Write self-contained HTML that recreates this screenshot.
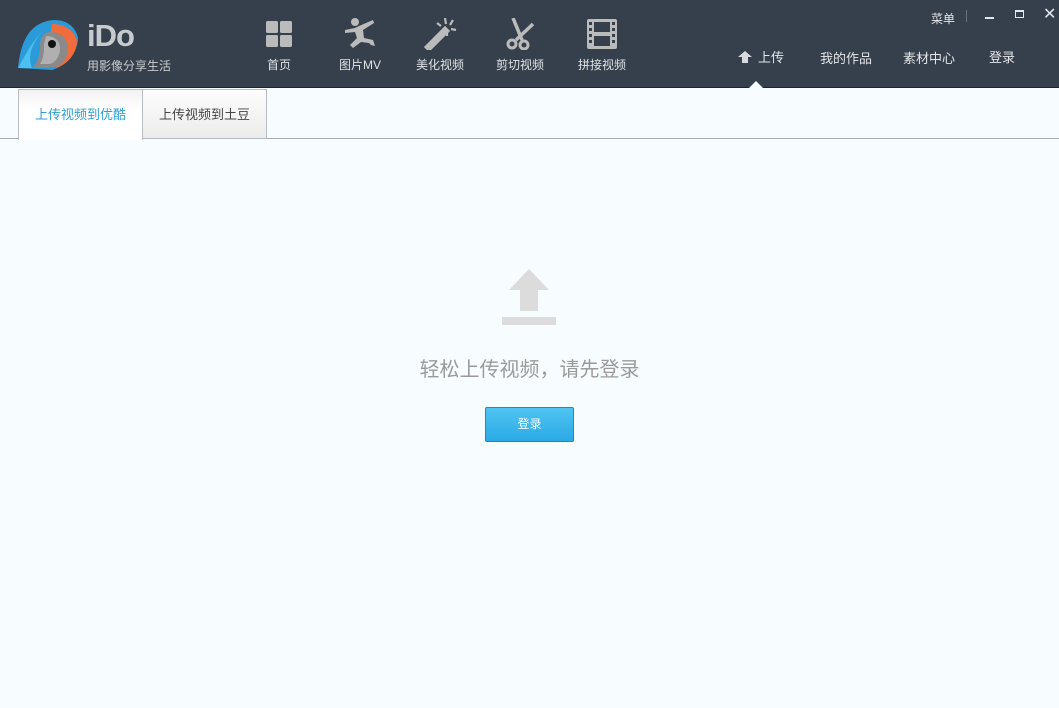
<!DOCTYPE html>
<html><head><meta charset="utf-8"><style>
*{margin:0;padding:0;box-sizing:border-box}
body{width:1059px;height:708px;overflow:hidden;background:#f7fcff;font-family:"Liberation Sans","Noto Sans CJK SC",sans-serif;position:relative}
.top{position:absolute;left:0;top:0;width:1059px;height:88px;background:#36404c;border-bottom:1px solid #1e242b}
.t{position:absolute;color:#e3e6ea;font-size:12px;white-space:nowrap}
.nav{position:absolute;top:18px;width:60px;text-align:center;color:#e0e3e6;font-size:12px}
.nav svg{display:block;margin:0 auto 6px;height:32px}
.tab{position:absolute;top:89px;height:50px;font-size:13px;line-height:50px;text-align:center}
</style></head><body>
<div class="top">
<svg style="position:absolute;left:16px;top:18px" width="64" height="54" viewBox="0 0 64 54">
<path d="M2 50 C4 30 10 4 38 2 C52 2 60 10 62 20 C62 34 50 48 36 52 Z" fill="#2a9ad8"/>
<path d="M36 6 C50 6 60 14 61 24 C60 36 52 46 40 50 L34 20 Z" fill="#f26b3a"/>
<path d="M34 14 C46 14 52 22 52 30 C52 42 44 50 34 50 L16 50 C22 44 24 36 24 28 C24 20 28 14 34 14 Z" fill="#8a8a8a"/>
<path d="M30 18 C40 18 44 24 44 30 C44 38 40 44 34 46 L24 46 C28 40 28 32 28 26 Z" fill="#b0b0b0"/>
<circle cx="36" cy="26" r="4" fill="#111"/>
<path d="M2 50 C8 40 14 26 26 14 C14 28 12 40 16 50 Z" fill="#4cc0f0"/>
</svg>
<div class="t" style="left:87px;top:18px;font-size:31px;font-weight:bold;color:#c8cbce;letter-spacing:-1px">iDo</div>
<div class="t" style="left:87px;top:57px;font-size:12px;color:#c8cbce">用影像分享生活</div>

<div class="nav" style="left:249px"><svg width="28" height="28" viewBox="0 0 28 28"><rect x="1" y="1" width="12" height="12" rx="1.5" fill="#bbb"/><rect x="15" y="1" width="12" height="12" rx="1.5" fill="#bbb"/><rect x="1" y="15" width="12" height="12" rx="1.5" fill="#bbb"/><rect x="15" y="15" width="12" height="12" rx="1.5" fill="#bbb"/></svg>首页</div>
<div class="nav" style="left:330px"><svg width="34" height="32" viewBox="0 0 34 32"><circle cx="12" cy="4" r="4" fill="#bbb"/><path d="M2 12 L12 10 L16 8 L30 2 L31 5 L20 12 L21 20 L30 22 L32 28 L28 27 L26 25 L18 24 L10 30 L7 27 L14 20 L12 14 L2 15Z" fill="#bbb"/></svg>图片MV</div>
<div class="nav" style="left:410px"><svg width="34" height="32" viewBox="0 0 34 32"><path d="M3 29 L22 10 L25 13 L6 32 Z" fill="#bbb" stroke="#bbb" stroke-linecap="round" stroke-width="3"/><path d="M22 0 L23 6 M30 2 L27 7 M33 12 L28 11 M24 18 L24 14 M14 5 L18 8" stroke="#bbb" stroke-width="2.2"/></svg>美化视频</div>
<div class="nav" style="left:490px"><svg width="34" height="32" viewBox="0 0 34 32"><path d="M10 0 L19 22 M30 6 L13 22" stroke="#bbb" stroke-width="3.5"/><circle cx="9" cy="26" r="4" fill="none" stroke="#bbb" stroke-width="3"/><circle cx="21" cy="27" r="4" fill="none" stroke="#bbb" stroke-width="3"/></svg>剪切视频</div>
<div class="nav" style="left:572px"><svg width="34" height="32" viewBox="0 0 34 32"><rect x="2" y="1" width="30" height="30" rx="2" fill="#bbb"/><rect x="9" y="4" width="16" height="10" fill="#36404c"/><rect x="9" y="18" width="16" height="10" fill="#36404c"/><g fill="#36404c"><rect x="4" y="4" width="3" height="3"/><rect x="4" y="10" width="3" height="3"/><rect x="4" y="16" width="3" height="3"/><rect x="4" y="22" width="3" height="3"/><rect x="27" y="4" width="3" height="3"/><rect x="27" y="10" width="3" height="3"/><rect x="27" y="16" width="3" height="3"/><rect x="27" y="22" width="3" height="3"/></g></svg>拼接视频</div>

<div class="t" style="left:931px;top:10px">菜单</div>
<div style="position:absolute;left:966px;top:10px;width:1px;height:12px;background:#6a737c"></div>
<div style="position:absolute;left:985px;top:17px;width:9px;height:2px;background:#e3e6ea"></div>
<div style="position:absolute;left:1015px;top:10px;width:9px;height:8px;border:1.5px solid #e3e6ea;border-top-width:2px"></div>
<div class="t" style="left:1043px;top:4px;font-size:16px">✕</div>

<svg style="position:absolute;left:738px;top:51px" width="14" height="12" viewBox="0 0 14 12"><path d="M7 0 L14 6 L10 6 L10 12 L4 12 L4 6 L0 6Z" fill="#d8dbde"/></svg>
<div class="t" style="left:758px;top:47px;font-size:13px">上传</div>
<div class="t" style="left:820px;top:48px;font-size:13px">我的作品</div>
<div class="t" style="left:903px;top:48px;font-size:13px">素材中心</div>
<div class="t" style="left:989px;top:47px;font-size:13px">登录</div>
<div style="position:absolute;left:748px;top:81px;width:0;height:0;border-left:8px solid transparent;border-right:8px solid transparent;border-bottom:8px solid #f7fcff"></div>
</div>

<div style="position:absolute;left:0;top:138px;width:1059px;height:1px;background:#a9adb1"></div>
<div class="tab" style="left:18px;width:125px;background:linear-gradient(#f2f2f2,#fff 40%);border:1px solid #b8bcc0;border-bottom:none;color:#2f9fd0;height:51px">上传视频到优酷</div>
<div class="tab" style="left:142px;width:125px;background:linear-gradient(#fdfdfd,#ececec);border:1px solid #b8bcc0;color:#444;height:50px">上传视频到土豆</div>

<svg style="position:absolute;left:502px;top:269px" width="54" height="57" viewBox="0 0 54 57"><path d="M27 0 L47 21 L36 21 L36 42 L18 42 L18 21 L7 21Z" fill="#dcdcdc"/><rect x="0" y="48" width="54" height="8" fill="#dcdcdc"/></svg>
<div style="position:absolute;left:0;width:1059px;top:353px;text-align:center;font-size:20px;color:#9a9a9a">轻松上传视频，请先登录</div>
<div style="position:absolute;left:485px;top:407px;width:89px;height:35px;border:1px solid #1c8cc4;border-radius:2px;background:linear-gradient(#4fc4f2,#2ba9e4);color:#fff;font-size:12px;text-align:center;line-height:32px">登录</div>
</body></html>
